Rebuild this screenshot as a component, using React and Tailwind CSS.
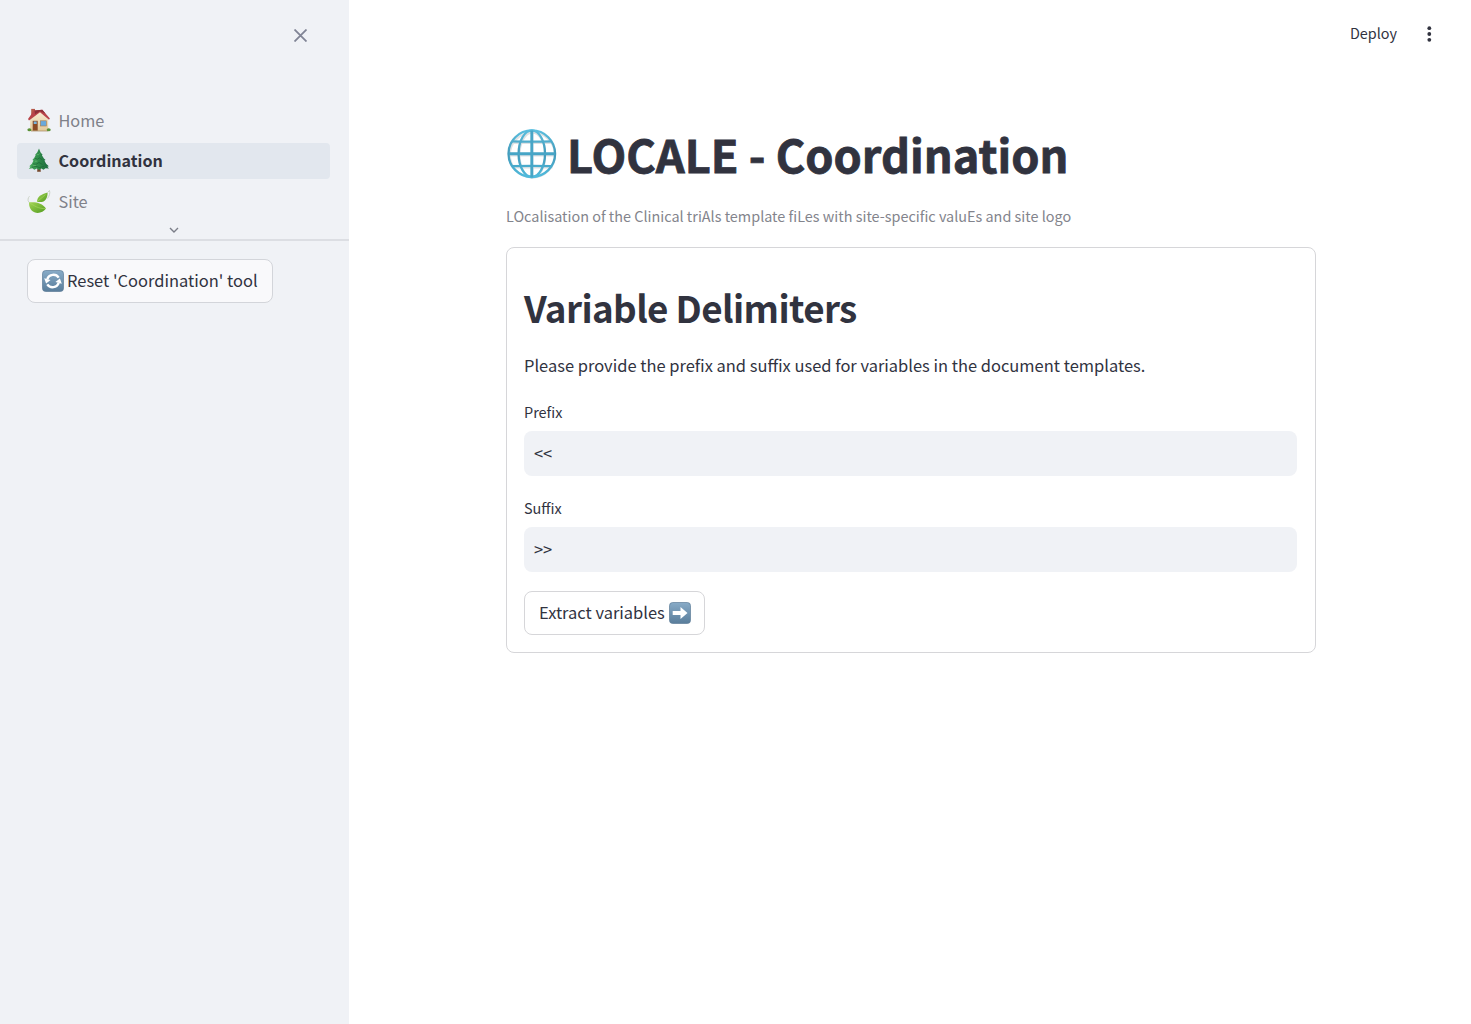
const face = "font-['Noto_Sans_CJK_SC','Source_Sans_Pro',sans-serif]";

function HouseIcon() {
  return (
    <svg viewBox="0 0 24 24" className="size-6 shrink-0">
      <defs>
        <linearGradient id="wall" x1="0" x2="0" y1="0" y2="1">
          <stop offset="0" stopColor="#f8ecd2" />
          <stop offset="1" stopColor="#e2c899" />
        </linearGradient>
      </defs>
      <path d="M4.200 .9h3.800v6H4.200z" fill="#b5584a" />
      <path d="M3.200 11 12.800 3.500l8.400 8v11.500H3.200z" fill="url(#wall)" />
      <path d="M7 2.400 15.300 1.700 22.900 10.600 22 11.700 13 4.300 2 12.400 1 11z" fill="#b94449" />
      <path d="M7.500 2.400 15.300 1.700 18.500 5.500 13 3.200 8 6.200z" fill="#8c3038" />
      <rect x="5.700" y="12.800" width="5" height="9.900" fill="#8a4a24" />
      <rect x="6.700" y="13.500" width="3" height="2.500" fill="#79b4dc" />
      <rect x="13.300" y="12.800" width="6" height="5.200" fill="#69a9dc" stroke="#a87a4c" strokeWidth=".6" />
      <path d="M4 23h17" stroke="#a5865b" strokeWidth=".7" />
      <ellipse cx="2.400" cy="21.800" rx="2" ry="1.500" fill="#5b9136" />
      <ellipse cx="21.700" cy="21.800" rx="2" ry="1.500" fill="#5b9136" />
    </svg>
  );
}

function TreeIcon() {
  return (
    <svg viewBox="0 0 24 24" className="size-6 shrink-0">
      <defs>
        <linearGradient id="pine" x1="0" x2="1">
          <stop offset="0" stopColor="#4cae5e" />
          <stop offset=".5" stopColor="#2f8a49" />
          <stop offset="1" stopColor="#1b683e" />
        </linearGradient>
      </defs>
      <path d="M10.600 19h2.800l.4 4.800h-3.700z" fill="#76492d" />
      <path d="M12 .4 13.600 4.600 15.600 6.800 14.900 7.300 16.900 10.500 18.600 11.900 17.400 12.600 19.100 15.700 21.800 18.200 20.300 18.700 22 20.600 18.500 20.300 16.500 21.700 14.300 20.500 12 22 9.700 20.600 7.300 21.800 5.300 20.300 1.800 21 3.500 18.700 2.300 18.200 4.900 15.700 6.500 12.600 5.400 12 7.300 9.800 8.600 7.200 8.200 6.800 10.300 4.300z" fill="url(#pine)" />
      <path d="m8 10.300 2.500.9 1.800-1.300 2.700 1.700M6 15.800l3 .5 3-1.800 3.500 2M5 19.300l4-1 3.500 1.300 4.500-1.300" fill="none" stroke="#1c6535" strokeWidth=".7" />
      <path d="m9.700 6.500 1.800.3 1-1.300M8 13.300l2.300-.2M6 17.800l3-.5" fill="none" stroke="#6dbb72" strokeWidth=".7" />
    </svg>
  );
}

function LeafIcon() {
  return (
    <svg viewBox="0 0 24 24" className="size-6 shrink-0">
      <defs>
        <linearGradient id="leaf" x1="0" x2="1" y1="0" y2="1">
          <stop offset="0" stopColor="#a3d453" />
          <stop offset="1" stopColor="#519c20" />
        </linearGradient>
      </defs>
      <path d="M10 11.800C10.400 6.200 13.800 4.400 20.600 2.400c0 6-2.500 11-10.600 9.400Z" fill="url(#leaf)" />
      <path d="M2 12.400c7-.7 13.700.9 17 6.200-4.400 6.700-17.300 6.300-17-6.200Z" fill="url(#leaf)" />
      <path d="M2 12.400C7 15.600 11 18.900 19 18.600M10 11.800 18.500 4.600" fill="none" stroke="#a9d865" strokeWidth=".6" />
      <path d="M2 12.400C.3 10 1 7.900 2.500 6.200M20.600 2.400l1.900-1.900c.9 3-.3 5.500-2 8" fill="none" stroke="#c3ccbd" strokeWidth=".8" />
    </svg>
  );
}

function KeyTile({ kind }) {
  return (
    <svg viewBox="0 0 22 22" className="size-[22px] shrink-0">
      <defs>
        <linearGradient id={"tile-" + kind} x1="0" x2="0" y1="0" y2="1">
          <stop offset="0" stopColor="#88abc7" />
          <stop offset="1" stopColor="#597d9b" />
        </linearGradient>
      </defs>
      <rect x=".5" y=".5" width="21" height="21" rx="3.200" fill={"url(#tile-" + kind + ")"} stroke="#5d7d98" strokeWidth=".7" />
      {kind === "arrow" ? (
        <path d="M3.700 8.900h7.800V5.100l7 5.900-7 5.900v-3.800H3.700z" fill="#fff" />
      ) : (
        <g>
          <path d="M5.300 9.200A6.400 6.400 0 0 1 16.700 7.700M16.700 12.800A6.400 6.400 0 0 1 5.300 14.300" fill="none" stroke="#fff" strokeWidth="2.400" />
          <path d="M2.200 8.200 8.600 10 4.100 13.400zM19.800 13.800 13.400 12 17.900 8.600z" fill="#fff" />
        </g>
      )}
    </svg>
  );
}

function GlobeIcon() {
  return (
    <svg viewBox="0 0 50 50" className="size-[50px] shrink-0">
      <defs>
        <linearGradient id="globe" gradientUnits="userSpaceOnUse" x1="0" x2="0" y1="0" y2="50">
          <stop offset="0" stopColor="#5cc0e0" />
          <stop offset=".5" stopColor="#4299b9" />
          <stop offset="1" stopColor="#52bee0" />
        </linearGradient>
      </defs>
      <g fill="none" stroke="#dde1e3" strokeWidth="2" transform="translate(.9 1.500)">
        <circle cx="24.500" cy="24.500" r="22.500" />
        <ellipse cx="24.500" cy="24.500" rx="12.800" ry="22.500" />
        <path d="M24.500 2v45M5.500 12.500h39M2 25h46M5.500 37h39" />
      </g>
      <g fill="none" stroke="url(#globe)" strokeWidth="2.300">
        <circle cx="24.800" cy="24.700" r="23.300" />
        <ellipse cx="24.800" cy="24.700" rx="13.200" ry="23.300" />
        <path d="M5 12.300q20 .8 39.500 0M5 37.200q20-.8 39.500 0" />
        <path d="M24.800 1.500v47M1.500 24.700h46.500" stroke="#47a5c6" strokeWidth="2.900" />
      </g>
    </svg>
  );
}

function Field({ label, value, spacing }) {
  return (
    <div className={spacing}>
      <div className="h-[22px] text-[14.450px] leading-[22px]">{label}</div>
      <div className="mt-[8px] flex h-[45px] items-center rounded-lg bg-[#f0f2f6] pl-[10px] text-[16.450px]">{value}</div>
    </div>
  );
}

export default function App() {
  return (
    <div className={"flex h-[1024px] w-[1471px] overflow-hidden bg-white text-[#31333f] " + face}>
      <aside className="flex w-[349px] shrink-0 flex-col bg-[#f0f2f6]">
        <div className="flex h-[102px] justify-end pt-[29px] pr-[42px]">
          <svg viewBox="0 0 13 13" className="size-[13px]" fill="none" stroke="#808495" strokeWidth="1.800"><path d="m.5.5 12 12M12.500.5l-12 12" /></svg>
        </div>
        <nav className="flex flex-col gap-1 px-[17px] text-[16.300px] leading-6 text-[#7f8189]">
          <a className="flex h-[37px] items-center gap-[8px] pb-px pl-[9.500px]"><HouseIcon /><span className="pb-px">Home</span></a>
          <a className="flex h-[36px] w-[313px] items-center gap-[8px] rounded bg-[#e2e7ee] pb-[2px] pl-[9.500px] text-[16.100px] font-bold text-[#31333f]"><TreeIcon /><span>Coordination</span></a>
          <a className="flex h-[37px] items-center gap-[8px] pl-[9.500px]"><LeafIcon /><span className="pb-[2px]">Site</span></a>
        </nav>
        <div className="flex h-[21px] justify-center border-b-2 border-[#dcdee3] pt-[7px]">
          <svg viewBox="0 0 10 7" className="mr-px h-[7px] w-[10px]" fill="none" stroke="#7b7e88" strokeWidth="1.400"><path d="m1 1 4 4 4-4" /></svg>
        </div>
        <button className="mt-[18px] ml-[27px] flex h-[44px] w-[246px] items-center gap-[3px] rounded-lg border border-[#d3d5da] bg-[#f9f9fb] pb-px pl-[14px] text-[16.480px] leading-6 whitespace-nowrap"><KeyTile kind="cycle" /><span className="pb-px">Reset 'Coordination' tool</span></button>
      </aside>
      <main className="flex flex-1 flex-col">
        <header className="flex h-[67px] items-center justify-end gap-[29px] pr-[39px] text-[14.400px] leading-[20px]">
          <span className="pb-px">Deploy</span>
          <svg viewBox="0 0 6 16" className="h-4 w-[6px]" fill="#31333f"><circle cx="3.300" cy="2.200" r="1.900" /><circle cx="3.300" cy="8" r="1.900" /><circle cx="3.300" cy="13.800" r="1.900" /></svg>
        </header>
        <section className="ml-[157px] w-[810px]">
          <h1 className="mt-[61px] flex h-[52px] items-center gap-[10px] pl-px text-[45.150px] leading-[50px] font-bold whitespace-nowrap"><GlobeIcon /><span className="[-webkit-text-stroke:0.8px_#31333f]">LOCALE - Coordination</span></h1>
          <p className="mt-[24px] h-[24px] text-[14.410px] leading-[24px] whitespace-nowrap text-[#83848c]">LOcalisation of the Clinical triAls template fiLes with site-specific valuEs and site logo</p>
          <div className="mt-[19px] h-[406px] rounded-lg border border-[#d6d6d9] px-[17px]">
            <h2 className="mt-[35px] h-[48px] text-[36.800px] leading-[48px] font-bold tracking-[-0.62px] whitespace-nowrap">Variable Delimiters</h2>
            <p className="mt-[21px] h-[26px] text-[16.480px] leading-[26px] whitespace-nowrap">Please provide the prefix and suffix used for variables in the document templates.</p>
            <Field label="Prefix" value="<<" spacing="mt-[23px] w-[773px]" />
            <Field label="Suffix" value=">>" spacing="mt-[21px] w-[773px]" />
            <button className="mt-[19px] flex h-[44px] w-[181px] items-center gap-[4px] rounded-lg border border-[#d6d6d9] pb-px pl-[14px] text-[16.480px] leading-6 whitespace-nowrap"><span className="pb-px">Extract variables</span><KeyTile kind="arrow" /></button>
          </div>
        </section>
      </main>
    </div>
  );
}
